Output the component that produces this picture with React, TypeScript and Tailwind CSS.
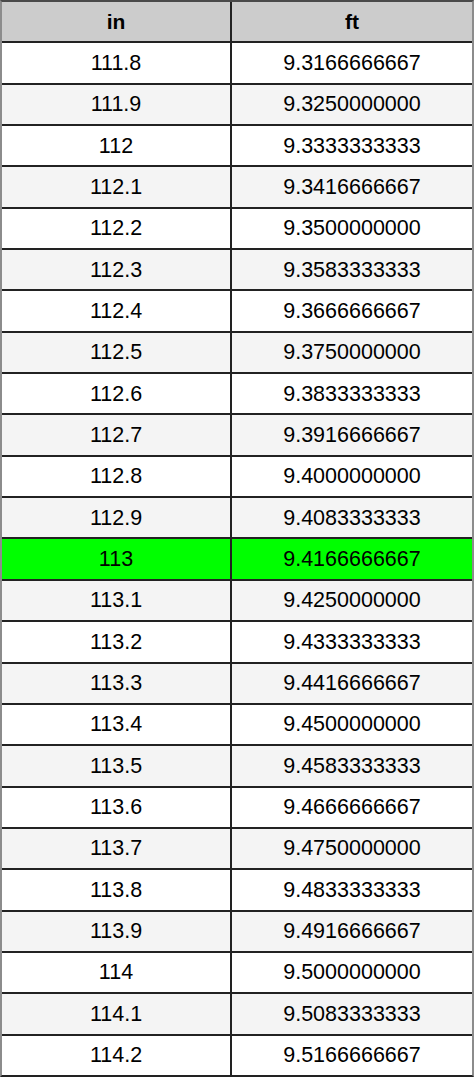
import React from "react";

const rows: [string, string][] = [
  ["111.8", "9.3166666667"],
  ["111.9", "9.3250000000"],
  ["112", "9.3333333333"],
  ["112.1", "9.3416666667"],
  ["112.2", "9.3500000000"],
  ["112.3", "9.3583333333"],
  ["112.4", "9.3666666667"],
  ["112.5", "9.3750000000"],
  ["112.6", "9.3833333333"],
  ["112.7", "9.3916666667"],
  ["112.8", "9.4000000000"],
  ["112.9", "9.4083333333"],
  ["113", "9.4166666667"],
  ["113.1", "9.4250000000"],
  ["113.2", "9.4333333333"],
  ["113.3", "9.4416666667"],
  ["113.4", "9.4500000000"],
  ["113.5", "9.4583333333"],
  ["113.6", "9.4666666667"],
  ["113.7", "9.4750000000"],
  ["113.8", "9.4833333333"],
  ["113.9", "9.4916666667"],
  ["114", "9.5000000000"],
  ["114.1", "9.5083333333"],
  ["114.2", "9.5166666667"],
];

export default function App() {
  return (
    <div
      className="w-[474px] h-[1077px] flex flex-col border-l-2 border-r-2 border-l-[#8c8c8c] border-r-[#8c8c8c] border-t-2 border-t-[#4a4a4a] border-b-2 border-b-[#222] text-black"
      style={{ fontFamily: '"Liberation Sans", Arial, sans-serif' }}
    >
      <div className="flex-1 grid grid-cols-[230px_1fr] bg-[#cccccc] border-b-2 border-[#222] font-bold text-[21px]">
        <div className="flex items-center justify-center border-r-2 border-[#222]">in</div>
        <div className="flex items-center justify-center">ft</div>
      </div>
      {rows.map(([a, b], i) => {
        const hl = a === "113";
        const bg = hl ? "bg-[#00ff00]" : i % 2 === 1 ? "bg-[#f4f4f4]" : "bg-white";
        return (
          <div
            key={a}
            className={`flex-1 grid grid-cols-[230px_1fr] text-[21.5px] ${bg} ${
              i < rows.length - 1 ? "border-b-2 border-[#222]" : ""
            }`}
          >
            <div className="flex items-center justify-center border-r-2 border-[#222]">{a}</div>
            <div className="flex items-center justify-center">{b}</div>
          </div>
        );
      })}
    </div>
  );
}
